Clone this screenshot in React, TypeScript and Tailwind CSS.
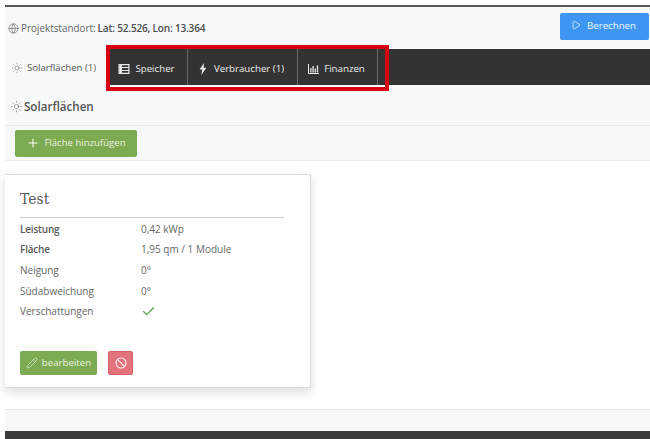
import React from 'react';
import { Ban, Check, Globe, Pencil, Play, Plus, Sun } from 'lucide-react';

const rows: { label: string; value: React.ReactNode; strong?: boolean }[] = [
  { label: 'Leistung', value: '0,42 kWp', strong: true },
  { label: 'Fläche', value: '1,95 qm / 1 Module', strong: true },
  { label: 'Neigung', value: '0°' },
  { label: 'Südabweichung', value: '0°' },
  { label: 'Verschattungen', value: <Check size={15} strokeWidth={1.75} className="text-[#4f9a45]" /> },
];

const StorageIcon = () => (
  <svg width="12" height="10" viewBox="0 0 11 10" className="mr-[5px]">
    <path fill="#e8e8e8" fillRule="evenodd" d="M0 0h11v10H0zM1.2 1.2v1.8h8.6V1.2zM1.2 4.1v1.8h8.6V4.1zM1.2 7v1.8h8.6V7z" />
    <path fill="#e8e8e8" d="M1 1h2.5v8H1z" />
  </svg>
);

const BoltIcon = () => (
  <svg width="8" height="12" viewBox="0 0 8 12" className="mr-[7px]">
    <path fill="#e8e8e8" d="M5 0 0.6 6.6h2.6L2.4 12 7.4 4.8H4.6z" />
  </svg>
);

const ChartIcon = () => (
  <svg width="11" height="10" viewBox="0 0 11 10" className="mr-[5px]">
    <path fill="none" stroke="#e8e8e8" strokeWidth="1" d="M0.5 0v9.5H11" />
    <path fill="#e8e8e8" d="M2.2 4h1.3v4.5H2.2zM4.4 2h1.3v6.5H4.4zM6.6 4.5h1.3v4H6.6zM8.8 1.5h1.3v7H8.8z" />
  </svg>
);

const DarkTab = ({ icon, label, width }: { icon: React.ReactNode; label: string; width: string }) => (
  <div className={`flex h-full items-center justify-center border-r border-[#6a6a6a] pr-[2px] pt-[4px] text-[9.7px] text-[#ececec] ${width}`}>
    {icon}
    {label}
  </div>
);

export default function App() {
  return (
    <div className="relative h-[439px] w-[650px] overflow-hidden bg-white pl-[5px] pt-[5px] font-['Open_Sans',sans-serif] text-[#444]">
      {/* Header */}
      <div className="flex h-[44px] items-center justify-between border-t-2 border-[#555] bg-[#f7f8fa] pb-[3px] pr-[1px]">
        <div className="flex items-center pl-[3px] pt-[3px] text-[9.9px] text-[#666]">
          <Globe size={11} strokeWidth={1.25} className="mr-[2px] text-[#555]" />
          <span>Projektstandort:</span>
          <span className="ml-[2px] text-[10px] font-semibold tracking-[-0.17px] text-[#4d4d4d]">Lat: 52.526, Lon: 13.364</span>
        </div>
        <div className="flex h-[27px] w-[89px] items-center justify-center rounded-[2px] bg-[#3f96f2] pr-[2px] text-[9.7px] text-[#eef6ff]">
          <Play size={10} strokeWidth={1.75} className="mb-[3px] mr-[6px]" />
          Berechnen
        </div>
      </div>

      {/* Tabs */}
      <div className="flex h-[36px] bg-[#333]">
        <div className="flex w-[103px] items-center bg-[#f7f8fa] pl-[6px] pt-[2px] text-[9.6px] text-[#555]">
          <Sun size={12} strokeWidth={1} className="mr-[4px]" />
          Solarflächen (1)
        </div>
        <DarkTab icon={<StorageIcon />} label="Speicher" width="w-[80px]" />
        <DarkTab icon={<BoltIcon />} label="Verbraucher (1)" width="w-[110px]" />
        <DarkTab icon={<ChartIcon />} label="Finanzen" width="w-[80px]" />
      </div>

      {/* Section heading */}
      <div className="flex h-[41px] items-center border-b border-[#e6e8ea] bg-[#f7f8fa] pl-[5px] pt-[3px] text-[11.6px] font-semibold text-[#555]">
        <Sun size={13} strokeWidth={1} className="mr-[1px]" />
        Solarflächen
      </div>

      {/* Toolbar */}
      <div className="flex h-[35px] items-center border-b border-[#e9ebed] bg-[#f7f8fa] pl-[10px]">
        <div className="flex h-[27px] w-[122px] items-center justify-center rounded-[2px] bg-[#7cab52] text-[9.6px] text-[#eaf3e0]">
          <Plus size={14} strokeWidth={1.75} className="mr-[4px] text-white" />
          Fläche hinzufügen
        </div>
      </div>

      {/* Card area */}
      <div className="h-[249px] border-b border-[#e6e8ea] pt-[13px]">
        <div className="h-[214px] w-[306px] border-r border-t border-b border-[#dcdcdc] bg-white pl-[15px] pr-[26px] pt-[14px] shadow-[0_4px_10px_rgba(0,0,0,0.14)]">
          <div className="h-[29px] border-b border-[#c9c9c9] pb-[5px] font-['DejaVu_Serif',serif] text-[14px] leading-[20px] text-[#5a5a5a]">
            Test
          </div>
          <div className="mt-[1px]">
            {rows.map((row) => (
              <div key={row.label} className="flex h-[20.6px] items-center text-[10px] text-[#666]">
                <div className={`w-[121px] ${row.strong ? 'font-semibold tracking-[-0.2px] text-[#5a5a5a]' : ''}`}>{row.label}</div>
                <div>{row.value}</div>
              </div>
            ))}
          </div>
          <div className="mt-[29px] flex gap-[11px]">
            <div className="flex h-[24px] w-[77px] items-center justify-center rounded-[2px] bg-[#7cab52] text-[9.7px] text-[#eaf3e0]">
              <Pencil size={12} strokeWidth={1.25} className="mr-[4px]" />
              bearbeiten
            </div>
            <div className="flex h-[24px] w-[25px] items-center justify-center rounded-[2px] border border-[#d9606a] bg-[#e2737c] text-[#fdf0f1]">
              <Ban size={12} strokeWidth={2.25} />
            </div>
          </div>
        </div>
      </div>

      {/* Footer */}
      <div className="h-[21px] bg-[#f7f8fa]" />
      <div className="h-[8px] bg-[#3b3b3b]" />

      {/* Red annotation over the tabs */}
      <div className="absolute left-[106px] top-[45px] h-[46px] w-[283px] border-[4px] border-[#d80011]" />
    </div>
  );
}
